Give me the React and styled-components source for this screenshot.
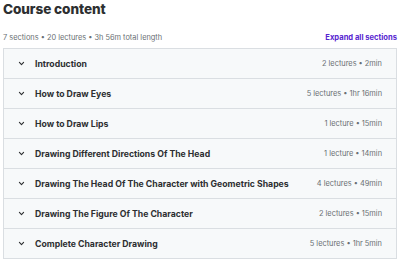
import React from "react";
import styled, { createGlobalStyle } from "styled-components";

const Global = createGlobalStyle`
  html, body { margin: 0; padding: 0; background: #fff; }
  body { font-family: Inter, "Noto Sans", sans-serif; color: #2d2f31; }
`;

const Page = styled.div`
  padding: 0 3px 0 3px;
  width: 394px;
`;

const Title = styled.h2`
  margin: 0;
  font-size: 13.6px;
  font-weight: 800;
  line-height: 18px;
  letter-spacing: -0.1px;
`;

const MetaBar = styled.div`
  display: flex;
  justify-content: space-between;
  align-items: center;
  margin-top: 13px;
  height: 12px;
  margin-bottom: 5px;
`;

const Meta = styled.span`
  font-size: 7.4px;
  color: #6a6f73;
`;

const Expand = styled.button`
  border: 0;
  background: none;
  padding: 0;
  font-family: inherit;
  font-size: 7.6px;
  font-weight: 700;
  color: #5624d0;
`;

const List = styled.div`
  border: 1px solid #dadee2;
  border-bottom: 0;
`;

const Row = styled.div`
  display: flex;
  align-items: center;
  height: 29px;
  padding: 0 14px 0 14px;
  background: #f7f9fa;
  border-bottom: 1px solid #dadee2;
`;

const Chevron = styled.svg`
  width: 7px;
  height: 7px;
  margin-right: 10px;
  flex-shrink: 0;
`;

const SectionTitle = styled.span`
  flex: 1;
  font-size: 8.7px;
  font-weight: 700;
  color: #2d2f31;
  white-space: nowrap;
`;

const SectionMeta = styled.span`
  font-size: 7.4px;
  color: #6a6f73;
  white-space: nowrap;
`;

const sections = [
  ["Introduction", "2 lectures • 2min"],
  ["How to Draw Eyes", "5 lectures • 1hr 16min"],
  ["How to Draw Lips", "1 lecture • 15min"],
  ["Drawing Different Directions Of The Head", "1 lecture • 14min"],
  ["Drawing The Head Of The Character with Geometric Shapes", "4 lectures • 49min"],
  ["Drawing The Figure Of The Character", "2 lectures • 15min"],
  ["Complete Character Drawing", "5 lectures • 1hr 5min"],
];

export default function App() {
  return (
    <>
      <Global />
      <Page>
        <Title>Course content</Title>
        <MetaBar>
          <Meta>7 sections • 20 lectures • 3h 56m total length</Meta>
          <Expand>Expand all sections</Expand>
        </MetaBar>
        <List>
          {sections.map(([t, m]) => (
            <Row key={t}>
              <Chevron viewBox="0 0 10 10">
                <path d="M2 3.5 L5 6.5 L8 3.5" fill="none" stroke="#2d2f31" strokeWidth="1.6" strokeLinecap="round" strokeLinejoin="round" />
              </Chevron>
              <SectionTitle>{t}</SectionTitle>
              <SectionMeta>{m}</SectionMeta>
            </Row>
          ))}
        </List>
      </Page>
    </>
  );
}
